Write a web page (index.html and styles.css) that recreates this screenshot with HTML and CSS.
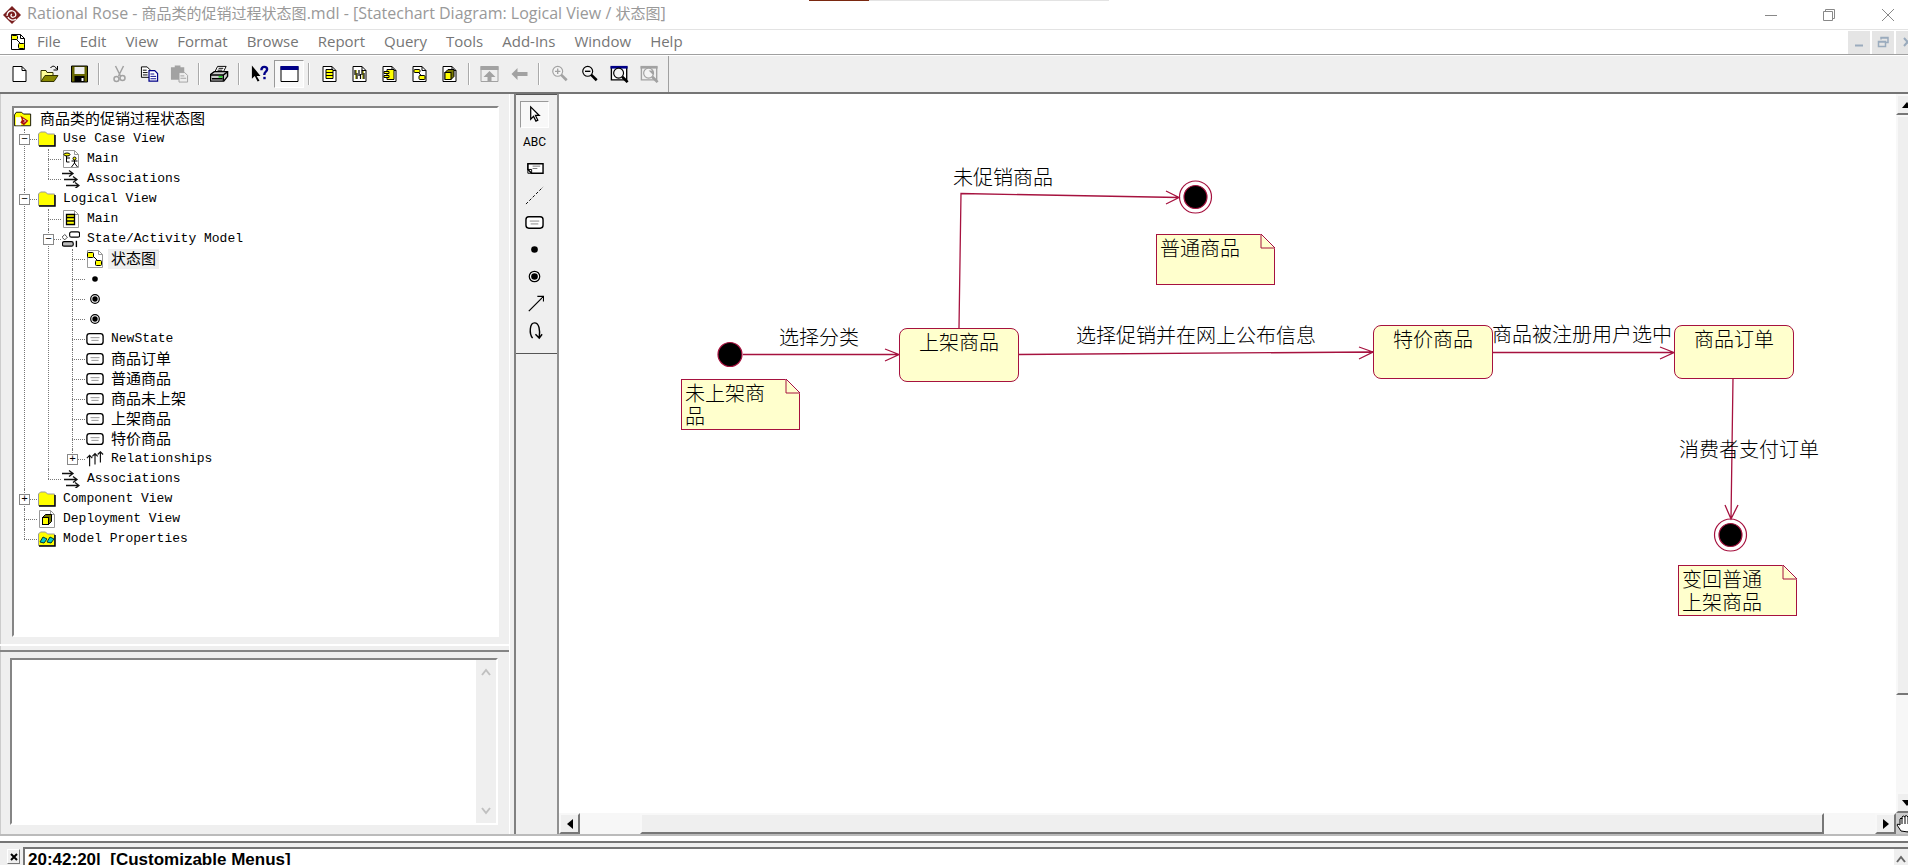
FILE: index.html
```html
<!DOCTYPE html>
<html lang="zh-CN">
<head>
<meta charset="utf-8">
<title>Rational Rose</title>
<link rel="stylesheet" href="styles.css">
</head>
<body>
<svg class="defs" aria-hidden="true">
  <symbol id="page" viewBox="0 0 18 18"><path d="M2.5 1.5h9l4 4v11h-13z" fill="#fff" stroke="#000"/><path d="M11.5 1.5v4h4" fill="none" stroke="#000"/></symbol>
  <symbol id="gpage" viewBox="0 0 18 18"><path d="M1.5 .5h11l4 4v13h-15z" fill="#fff" stroke="#999"/><path d="M12.500 .5v4h4" fill="none" stroke="#999"/></symbol>
  <symbol id="folder" viewBox="0 0 18 16"><path d="M.5 14.500V3l2-2h5l2 2h7v11.500z" fill="#ff0" stroke="#999"/><path d="M1 15h16V4" fill="none" stroke="#000" stroke-width="1.500"/></symbol>
  <symbol id="state" viewBox="0 0 20 14"><rect x="1" y="1" width="18" height="12" rx="3" fill="#fff" stroke="#000" stroke-width="1.500"/><path d="M5 5.500h10M6 8.500h8" stroke="#888"/></symbol>
  <symbol id="assoc" viewBox="0 0 18 18"><path d="M0 3.500h11M7 .5l4 3-4 3M2 9.500h13M11 6.500l4 3-4 3M4 15.500h13M13 12.500l4 3-4 3" fill="none" stroke="#111" stroke-width="1.300"/></symbol>
  <symbol id="final" viewBox="0 0 18 18"><circle cx="9" cy="9" r="4.300" fill="#fff" stroke="#000" stroke-width="1.200"/><circle cx="9" cy="9" r="2.700"/></symbol>
  <symbol id="dot" viewBox="0 0 18 18"><circle cx="9" cy="9" r="2.800"/></symbol>
  <symbol id="lens" viewBox="0 0 20 20"><circle cx="8" cy="7" r="5.500" fill="#f4f4f4" stroke="currentColor" stroke-width="1.300"/><path d="M12 11l6 6" stroke="currentColor" stroke-width="3"/></symbol>
  <symbol id="statedoc" viewBox="0 0 18 18"><use href="#page"/><path d="M7 6l6 6" stroke="#000"/><rect x="2.500" y="2.500" width="6" height="4" rx="1" fill="#ff0" stroke="#000"/><rect x="9.500" y="10.500" width="6" height="5" rx="1" fill="#ff0" stroke="#000"/></symbol>
  <symbol id="cubedoc" viewBox="0 0 18 18"><use href="#page"/><path d="M4.500 7.500l3-3h6v7l-3 3h-6z" fill="#770" stroke="#000"/><rect x="4.500" y="7.500" width="6" height="7" fill="#ff0" stroke="#000"/></symbol>
</svg>

<header class="titlebar">
  <svg class="logo" viewBox="0 0 20 20"><path d="M10 1l9 9-9 9-9-9z" fill="#7a1f1f"/><path d="M5 11c0-4 3-6 6-5s4 5 1 6-4-2-2-3M6 12c1 3 5 4 8 2" fill="none" stroke="#fff" stroke-width="1.300"/></svg>
  <h1 class="title">Rational Rose - <span>商品类的促销过程状态图</span>.mdl - [Statechart Diagram: Logical View / <span>状态图</span>]</h1>
  <div class="window-buttons">
    <button aria-label="Minimize"><svg viewBox="0 0 14 14"><path d="M1 7.500h12"/></svg></button>
    <button aria-label="Restore"><svg viewBox="0 0 14 14"><path d="M1.500 3.500h9v9h-9zM3.500 3V1.500h9v9H11"/></svg></button>
    <button aria-label="Close"><svg viewBox="0 0 14 14"><path d="M1 1l12 12M13 1L1 13"/></svg></button>
  </div>
  <span class="accent"></span>
</header>

<nav class="menubar">
  <svg class="doc" viewBox="0 0 18 18"><use href="#statedoc"/></svg>
  <button>File</button><button>Edit</button><button>View</button><button>Format</button><button>Browse</button><button>Report</button><button>Query</button><button>Tools</button><button>Add-Ins</button><button>Window</button><button>Help</button>
  <div class="mdi">
    <button aria-label="Minimize diagram"><svg viewBox="0 0 12 12"><path d="M2 9.500h8" stroke-width="2"/></svg></button>
    <button aria-label="Restore diagram"><svg viewBox="0 0 12 12"><path d="M1.500 5.500h7v5h-7zM1 6h8M4 3.500V1.500h7v5H9M4 2h7" stroke-width="1.500"/></svg></button>
    <button aria-label="Close diagram"><svg viewBox="0 0 12 12"><path d="M3 2l7 8M10 2l-7 8" stroke-width="2"/></svg></button>
  </div>
</nav>

<div class="toolbar">
  <div class="tools">
    <button aria-label="New"><svg viewBox="0 0 18 18"><use href="#page"/></svg></button>
    <button aria-label="Open"><svg viewBox="0 0 18 18"><path d="M.5 16.500v-11h5l1 2h6v3" fill="#ff9" stroke="#330"/><path d="M.5 16.500l4-6h13l-4 6z" fill="#880" stroke="#330"/><path d="M10 3c2-3 5-2 6 1M17 1v4h-4" fill="none" stroke="#000"/></svg></button>
    <button aria-label="Save"><svg viewBox="0 0 18 18"><path d="M1 1h16v16H1z" fill="#660" stroke="#000"/><path d="M4 2h10v7H4z" fill="#eee"/><path d="M4 11h10v6H4z"/><path d="M11 13h2v3h-2z" fill="#fff"/></svg></button>
    <span class="sep"></span>
    <button aria-label="Cut" class="off"><svg viewBox="0 0 18 18"><path d="M5 1l5 10M13 1L8 11" fill="none" stroke="currentColor" stroke-width="1.500"/><circle cx="6" cy="14" r="2.500" fill="none" stroke="currentColor" stroke-width="1.500"/><circle cx="12" cy="13" r="2.500" fill="none" stroke="currentColor" stroke-width="1.500"/></svg></button>
    <button aria-label="Copy"><svg viewBox="0 0 20 18"><path d="M1.500 1.500h6l3 3v8h-9z" fill="#fff" stroke="#000"/><path d="M3 5h4M3 7.500h5M3 10h5" stroke="#000"/><path d="M9.500 5.500h6l3 3v8h-9z" fill="#fff" stroke="#008" stroke-width="1.300"/><path d="M11 9h4M11 11.500h6M11 14h6" stroke="#008"/></svg></button>
    <button aria-label="Paste" class="off"><svg viewBox="0 0 20 18"><path d="M1 2h4V0h6v2h4v13H1z" fill="currentColor"/><path d="M9.500 7.500h6l3 3v7h-9z" fill="#eee" stroke="currentColor"/><path d="M11 11h4M11 13.500h6" stroke="currentColor"/></svg></button>
    <span class="sep"></span>
    <button aria-label="Print"><svg viewBox="0 0 20 18"><path d="M5 7l3-6h9l-3 6z" fill="#fff" stroke="#000"/><path d="M9 3h5M8 5h5" stroke="#000"/><path d="M.5 9.500l4-3h14v5l-4 5h-14z" fill="#ccc" stroke="#000" stroke-width="1.500"/><path d="M1 10h13l4-3M14 10v6M2 14h11" fill="none" stroke="#000" stroke-width="1.500"/><path d="M9 12h4" stroke="#0c0" stroke-width="1.500"/></svg></button>
    <span class="sep"></span>
    <button aria-label="Context help"><svg viewBox="0 0 20 18"><path d="M2 0v14l3-3 3 6 2-1-3-5h4z"/><path d="M12 5c0-5 6-4 6-1 0 3-3 2-3 6" fill="none" stroke="#008" stroke-width="2.500"/><path d="M14 12h2.500v2.500H14z" fill="#008"/></svg></button>
    <button aria-label="View documentation" class="pressed"><svg viewBox="0 0 18 18"><path d="M.5 1.500h17v15H.5z" fill="#fff" stroke="#000"/><path d="M0 1h18v4H0z" fill="#008"/></svg></button>
    <span class="sep"></span>
    <button aria-label="Class diagram"><svg viewBox="0 0 18 18"><use href="#page"/><path d="M5.500 4.500h7v9h-7zM5.500 7.500h7M5.500 10.500h7" fill="#ff0" stroke="#000"/></svg></button>
    <button aria-label="Interaction diagram"><svg viewBox="0 0 18 18"><use href="#page"/><path d="M5.500 5v9M12.500 6v8" stroke="#aa0" stroke-width="1.500"/><path d="M4.500 5v5M6.500 8v6M8.500 5v6M10 9v5M11.500 5v5M13.500 8v6" stroke="#000" stroke-width="1.200"/></svg></button>
    <button aria-label="Component diagram"><svg viewBox="0 0 18 18"><use href="#page"/><path d="M6.500 4.500h7v10h-7z" fill="#ff0" stroke="#000"/><path d="M3.500 6.500h5v2h-5zM3.500 10.500h5v2h-5z" fill="#ff0" stroke="#000"/></svg></button>
    <button aria-label="State diagram"><svg viewBox="0 0 18 18"><use href="#page"/><path d="M7 6l4 5" stroke="#000"/><rect x="3.500" y="4.500" width="6" height="3" rx="1" fill="#ff0" stroke="#000"/><rect x="8.500" y="10.500" width="6" height="4" rx="1" fill="#ff0" stroke="#000"/></svg></button>
    <button aria-label="Deployment diagram"><svg viewBox="0 0 18 18"><use href="#cubedoc"/></svg></button>
    <span class="sep"></span>
    <button aria-label="Browse parent" class="off"><svg viewBox="0 0 18 18"><path d="M.5 1.500h17v15H.5z" fill="none" stroke="currentColor"/><path d="M0 1h18v4H0z" fill="currentColor"/><path d="M9 6l6 6h-4v5H7v-5H3z" fill="currentColor"/></svg></button>
    <button aria-label="Browse previous" class="off"><svg viewBox="0 0 18 18"><path d="M1 9l6-6v4h10v4H7v4z" fill="currentColor"/></svg></button>
    <span class="sep"></span>
    <button aria-label="Zoom in" class="off"><svg viewBox="0 0 20 20"><use href="#lens"/><path d="M5 7h6M8 4v6" stroke="currentColor" stroke-width="1.500"/></svg></button>
    <button aria-label="Zoom out"><svg viewBox="0 0 20 20"><use href="#lens"/><path d="M5 7h6" stroke="#000" stroke-width="1.500"/></svg></button>
    <button aria-label="Fit in window"><svg viewBox="0 0 20 20"><path d="M1 2.500h17v14H1z" fill="#fff" stroke="#000" stroke-width="1.500"/><path d="M0 1h19v3H0z" fill="#008"/><g transform="translate(1 2)"><use href="#lens" width="20" height="20"/></g></svg></button>
    <button aria-label="Undo fit" class="off"><svg viewBox="0 0 20 20"><path d="M1 2.500h17v14H1z" fill="none" stroke="currentColor" stroke-width="1.500"/><path d="M0 1h19v3H0z" fill="currentColor"/><g transform="translate(1 2)"><use href="#lens" width="20" height="20"/></g><path d="M9 6h5v5z" fill="currentColor"/></svg></button>
  </div>
</div>

<main class="workspace">
  <aside class="browser">
    <div class="tree-pane">
      <div class="row root"><svg class="ico" viewBox="0 0 20 18"><path d="M.5 16.500v-12l2-3h6l2 2h8v13z" fill="#ff0" stroke="#000"/><path d="M2 7h6v9H2z" fill="#fff"/><path d="M7 5l9 6-5 5-4-3 2-3z" fill="#a11"/><path d="M10 9l3 2-2 2" fill="none" stroke="#fff"/></svg><span class="zh">商品类的促销过程状态图</span></div>
      <ul class="tree">
        <li><div class="row"><button class="exp" aria-label="Collapse">−</button><svg class="ico" viewBox="0 0 18 16"><use href="#folder"/></svg><span>Use Case View</span></div>
          <ul>
            <li><div class="row"><svg class="ico" viewBox="0 0 18 18"><use href="#gpage"/><ellipse cx="5" cy="4.500" rx="3" ry="1.500" fill="#ff0" stroke="#000"/><path d="M4.500 6v6h3M5 8h3M12.500 9v4M9.500 11h6M12.500 13l-3 4M12.500 13l3 4" fill="none" stroke="#000"/><circle cx="12.500" cy="8.500" r="1.500" fill="#ff0" stroke="#000"/></svg><span>Main</span></div></li>
            <li><div class="row"><svg class="ico" viewBox="0 0 18 18"><use href="#assoc"/></svg><span>Associations</span></div></li>
          </ul>
        </li>
        <li><div class="row"><button class="exp" aria-label="Collapse">−</button><svg class="ico" viewBox="0 0 18 16"><use href="#folder"/></svg><span>Logical View</span></div>
          <ul>
            <li><div class="row"><svg class="ico" viewBox="0 0 18 18"><use href="#gpage"/><path d="M4.500 4.500h8v10h-8zM4.500 7.500h8M4.500 11h8" fill="#ff0" stroke="#000" stroke-width="1.300"/></svg><span>Main</span></div></li>
            <li><div class="row"><button class="exp" aria-label="Collapse">−</button><svg class="ico" viewBox="0 0 20 18"><path d="M3 4l3 3-3 3-3-3z" fill="#fff" stroke="#333"/><rect x="8.500" y="1" width="11" height="6" rx="2" fill="#fff" stroke="#000" stroke-width="1.300"/><rect x=".5" y="12" width="12" height="5" rx="2" fill="#bbb" stroke="#000" stroke-width="1.300"/><path d="M16 11v7" stroke="#000" stroke-width="1.500"/></svg><span>State/Activity Model</span></div>
              <ul>
                <li><div class="row"><svg class="ico" viewBox="0 0 18 18"><use href="#gpage"/><path d="M7 6l6 6" stroke="#000"/><rect x="1.500" y="2.500" width="6" height="5" rx="1" fill="#ff0" stroke="#000"/><rect x="9.500" y="10.500" width="6" height="5" rx="1" fill="#ff0" stroke="#000"/></svg><span class="zh selected">状态图</span></div></li>
                <li><div class="row"><svg class="ico" viewBox="0 0 18 18"><use href="#dot"/></svg></div></li>
                <li><div class="row"><svg class="ico" viewBox="0 0 18 18"><use href="#final"/></svg></div></li>
                <li><div class="row"><svg class="ico" viewBox="0 0 18 18"><use href="#final"/></svg></div></li>
                <li><div class="row"><svg class="ico" viewBox="0 0 20 14"><use href="#state"/></svg><span>NewState</span></div></li>
                <li><div class="row"><svg class="ico" viewBox="0 0 20 14"><use href="#state"/></svg><span class="zh">商品订单</span></div></li>
                <li><div class="row"><svg class="ico" viewBox="0 0 20 14"><use href="#state"/></svg><span class="zh">普通商品</span></div></li>
                <li><div class="row"><svg class="ico" viewBox="0 0 20 14"><use href="#state"/></svg><span class="zh">商品未上架</span></div></li>
                <li><div class="row"><svg class="ico" viewBox="0 0 20 14"><use href="#state"/></svg><span class="zh">上架商品</span></div></li>
                <li><div class="row"><svg class="ico" viewBox="0 0 20 14"><use href="#state"/></svg><span class="zh">特价商品</span></div></li>
                <li><div class="row"><button class="exp" aria-label="Expand">+</button><svg class="ico" viewBox="0 0 20 18"><path d="M4 17V5M1 8l3-3 3 3M10 15V3M7 6l3-3 3 3M16 13V1M13 4l3-3 3 3" fill="none" stroke="#111" stroke-width="1.300"/></svg><span>Relationships</span></div></li>
              </ul>
            </li>
            <li><div class="row"><svg class="ico" viewBox="0 0 18 18"><use href="#assoc"/></svg><span>Associations</span></div></li>
          </ul>
        </li>
        <li><div class="row"><button class="exp" aria-label="Expand">+</button><svg class="ico" viewBox="0 0 18 16"><use href="#folder"/></svg><span>Component View</span></div></li>
        <li><div class="row"><svg class="ico" viewBox="0 0 18 18"><use href="#gpage"/><path d="M4.500 7.500l3-3h6v7l-3 3h-6z" fill="#770" stroke="#000"/><rect x="4.500" y="7.500" width="6" height="7" fill="#ff0" stroke="#000"/></svg><span>Deployment View</span></div></li>
        <li><div class="row"><svg class="ico" viewBox="0 0 18 16"><use href="#folder"/><path d="M2 11l3-5 4 2-3 4zM9 11l3-5 4 2-3 4z" fill="#0cc" stroke="#033"/></svg><span>Model Properties</span></div></li>
      </ul>
    </div>
    <div class="doc-pane">
      <textarea aria-label="Documentation"></textarea>
      <div class="thin-scroll"><svg viewBox="0 0 10 8"><path d="M1 7l4-5 4 5"/></svg><svg viewBox="0 0 10 8"><path d="M1 1l4 5 4-5"/></svg></div>
    </div>
  </aside>

  <div class="toolbox-column">
    <div class="toolbox">
      <button class="pressed" aria-label="Select"><svg viewBox="0 0 20 20"><path d="M6 2v13l3-3 2.500 5 2-1-2.500-5h4z" fill="#fff" stroke="#000" stroke-width="1.300"/></svg></button>
      <button class="abc">ABC</button>
      <button aria-label="Note"><svg viewBox="0 0 20 20"><path d="M3 5h16v10H7l-4-4z" fill="#fff" stroke="#000" stroke-width="1.500"/><path d="M3 5v10h4v-4H3" fill="none" stroke="#000"/><path d="M8 7.500h8M8 10h5" fill="none" stroke="#777"/></svg></button>
      <button aria-label="Anchor"><svg viewBox="0 0 20 20"><path d="M1 19L19 1" stroke="#000" stroke-dasharray="3 2"/></svg></button>
      <button aria-label="State"><svg viewBox="0 0 20 14"><use href="#state"/></svg></button>
      <button aria-label="Start state"><svg viewBox="0 0 20 20"><circle cx="10" cy="10" r="3.500"/></svg></button>
      <button aria-label="End state"><svg viewBox="0 0 20 20"><circle cx="10" cy="10" r="5.500" fill="#fff" stroke="#000" stroke-width="1.300"/><circle cx="10" cy="10" r="3.500"/></svg></button>
      <button aria-label="Transition"><svg viewBox="0 0 20 20"><path d="M4 18L19 3M13 2.500h6.500V8" fill="none" stroke="#000" stroke-width="1.300"/></svg></button>
      <button aria-label="Transition to self"><svg viewBox="0 0 20 20"><path d="M8 18c-4-5-3-16 2-16s6 8 5 15M11 14l4 4 3-4" fill="none" stroke="#000" stroke-width="1.500"/></svg></button>
    </div>
  </div>

  <section class="diagram">
    <div class="canvas">
      <svg class="wires" width="1337" height="719">
        <g fill="none" stroke="#a6123f" stroke-width="1.300">
          <path d="M184 260.500H340M326 255l14 5.500-14 6.500"/>
          <path d="M400 234L402 99.500L620 103.500M607 97l13 6.500-13 6.500"/>
          <path d="M459 260.500L814 258M800 253l14 5-14 7"/>
          <path d="M933 258.500H1115M1101 253l14 5.500-14 6.500"/>
          <path d="M1174 284L1172 425M1166 411l6 14 7-14"/>
        </g>
        <g stroke="#a6123f" stroke-width="1.200">
          <circle cx="171" cy="260.500" r="12"/>
          <circle cx="636.500" cy="103" r="16" fill="none"/><circle cx="636.500" cy="103" r="11.500"/>
          <circle cx="1171.500" cy="441" r="16" fill="none"/><circle cx="1171.500" cy="441" r="11.500"/>
        </g>
      </svg>
      <div class="state s1">上架商品</div>
      <div class="state s2">特价商品</div>
      <div class="state s3">商品订单</div>
      <div class="note n1">未上架商<br>品<svg viewBox="0 0 16 16"><path d="M0 0h16v16z" fill="#fff"/><path d="M1 0v14h14M1 0l14 14" fill="none" stroke="#a6123f"/></svg></div>
      <div class="note n2">普通商品<svg viewBox="0 0 16 16"><path d="M0 0h16v16z" fill="#fff"/><path d="M1 0v14h14M1 0l14 14" fill="none" stroke="#a6123f"/></svg></div>
      <div class="note n3">变回普通<br>上架商品<svg viewBox="0 0 16 16"><path d="M0 0h16v16z" fill="#fff"/><path d="M1 0v14h14M1 0l14 14" fill="none" stroke="#a6123f"/></svg></div>
      <span class="label l1">选择分类</span>
      <span class="label l2">未促销商品</span>
      <span class="label l3">选择促销并在网上公布信息</span>
      <span class="label l4">商品被注册用户选中</span>
      <span class="label l5">消费者支付订单</span>
    </div>
    <div class="vscroll">
      <button aria-label="Scroll up"><svg viewBox="0 0 10 6"><path d="M0 6l5-6 5 6z"/></svg></button>
      <span class="thumb"></span><span class="track"></span>
      <button aria-label="Scroll down"><svg viewBox="0 0 10 6"><path d="M0 0l5 6 5-6z"/></svg></button>
    </div>
    <div class="hscroll">
      <button aria-label="Scroll left"><svg viewBox="0 0 6 10"><path d="M6 0L0 5l6 5z"/></svg></button>
      <span class="track lead"></span><span class="thumb"></span><span class="track tail"></span>
      <button aria-label="Scroll right"><svg viewBox="0 0 6 10"><path d="M0 0l6 5-6 5z"/></svg></button>
    </div>
    <button class="pan" aria-label="Pan"><svg viewBox="0 0 18 18"><path d="M5 16L1 10q0-2 3 0V4q1-2 2 0V2q1-2 3 0v-1q2-1 3 1v1q2-1 2 1v8l-2 5z" fill="#fff" stroke="#000"/><path d="M6 3v6M9 2v7M12 3v6" stroke="#000"/></svg></button>
  </section>
</main>

<footer class="log">
  <button class="close" aria-label="Close log"><svg viewBox="0 0 8 8"><path d="M1 1l6 6M7 1L1 7" stroke="#000" stroke-width="2"/></svg></button>
  <div class="log-box"><pre>20:42:20|  [Customizable Menus]</pre><div class="thin-scroll dark"><svg viewBox="0 0 10 8"><path d="M1 7l4-5 4 5"/></svg></div></div>
</footer>
</body>
</html>
```
FILE: styles.css
```css
* { box-sizing: border-box; }

body {
  margin: 0;
  height: 100vh;
  display: flex;
  flex-direction: column;
  overflow: hidden;
  background: #efefef;
  color: #000;
  font-family: "Open Sans", "Noto Sans CJK SC", sans-serif;
  font-size: 15px;
}

button {
  margin: 0;
  padding: 0;
  border: 0;
  background: none;
  font: inherit;
  color: inherit;
  display: flex;
  align-items: center;
  justify-content: center;
}

.defs { display: none; }

/* Title bar */
.titlebar {
  position: relative;
  flex: none;
  height: 30px;
  display: flex;
  align-items: center;
  padding-left: 2px;
  background: #fff;
  border-bottom: 1px solid #e3e3e3;
}
.logo { width: 20px; height: 20px; }
.title {
  margin: 0 0 0 5px;
  padding-bottom: 2px;
  font-size: 16px;
  font-weight: 400;
  line-height: 27px;
  color: #999;
  white-space: nowrap;
}
.title span { font-size: 15px; }
.window-buttons { margin-left: auto; display: flex; }
.window-buttons button { width: 58px; height: 28px; }
.window-buttons button:last-child { width: 40px; margin-left: 10px; }
.window-buttons svg { width: 14px; height: 14px; fill: none; stroke: #888; }
.accent {
  position: absolute;
  top: 0;
  left: 809px;
  width: 300px;
  height: 1px;
  background: linear-gradient(90deg, #7a2810 60px, #e3e3e3 60px);
}

/* Menu bar */
.menubar {
  flex: none;
  height: 25px;
  display: flex;
  align-items: center;
  gap: 19px;
  padding-left: 9px;
  background: #fff;
  border-bottom: 1px solid #a0a0a0;
  color: #767676;
}
.menubar > button { height: 24px; padding-bottom: 2px; line-height: 22px; }
.doc { width: 18px; height: 18px; margin-right: -9px; }
.mdi { margin-left: auto; display: flex; gap: 2px; width: 60px; overflow: hidden; }
.mdi button { flex: none; width: 22px; height: 23px; background: #e5e5e5; }
.mdi svg { width: 12px; height: 12px; fill: none; stroke: #9aabbd; }

/* Tool bar */
.toolbar {
  flex: none;
  height: 39px;
  display: flex;
  border-top: 1px solid #fff;
  border-bottom: 2px solid #757575;
}
.tools {
  display: flex;
  align-items: center;
  padding: 0 4px;
  border-right: 1px solid #a0a0a0;
}
.tools button { width: 30px; height: 28px; }
.tools svg { width: 19px; height: 18px; }
.tools .off { color: #a2a2a2; }
.sep { width: 10px; height: 22px; display: flex; justify-content: center; }
.sep::before { content: ""; width: 1px; background: #aaa; border-right: 1px solid #fff; }
.pressed {
  background: #f8f8f8;
  border: 1px solid #fff;
  border-top-color: #999;
  border-left-color: #999;
}

/* Workspace */
.workspace { flex: 1; min-height: 0; display: flex; border-bottom: 2px solid #bbb; }

.browser {
  flex: none;
  width: 510px;
  display: grid;
  grid-template-rows: 557px 1fr;
  border-left: 1px solid #ccc;
  border-right: 1px solid #fff;
}
.tree-pane {
  margin: 12px 10px 14px 11px;
  padding-top: 1px;
  background: #fff;
  border: 2px solid #fff;
  border-top-color: #858585;
  border-left-color: #858585;
  font: 13px/20px "Liberation Mono", "Noto Sans CJK SC", monospace;
}
.zh { padding-bottom: 3px; font-size: 15px; font-family: "Noto Sans CJK SC", sans-serif; }
.tree, .tree ul { list-style: none; margin: 0; padding: 0; }
.tree { margin-left: 1px; }
.tree ul { margin-left: 24px; }
.tree li { position: relative; }
.tree li::before {
  content: "";
  position: absolute;
  left: 9px;
  top: 0;
  bottom: 0;
  border-left: 1px dotted #777;
}
.tree li:last-child::before { bottom: auto; height: 10px; }
.row {
  position: relative;
  height: 20px;
  display: flex;
  align-items: center;
  gap: 7px;
  padding-left: 23px;
  white-space: nowrap;
}
.tree .row::before {
  content: "";
  position: absolute;
  left: 9px;
  width: 13px;
  top: 10px;
  border-top: 1px dotted #777;
}
.row.root { padding-left: 0; gap: 8px; }
.ico { flex: none; width: 18px; height: 18px; }
.exp {
  position: absolute;
  left: 4px;
  top: 5px;
  width: 11px;
  height: 11px;
  background: #fff;
  border: 1px solid #888;
  font: 11px/9px "Liberation Mono", monospace;
}
.selected { background: #efefef; padding: 0 3px 3px; margin: 0 -3px; line-height: 17px; }

.doc-pane {
  margin: 7px 11px 9px 9px;
  display: flex;
  background: #fff;
  border: 2px solid #fff;
  border-top-color: #858585;
  border-left-color: #858585;
  position: relative;
}
.doc-pane::before {
  content: "";
  position: absolute;
  left: -12px;
  right: -13px;
  top: -16px;
  height: 4px;
  border-top: 2px solid #fff;
  border-bottom: 2px solid #858585;
}
.doc-pane textarea { flex: 1; border: 0; resize: none; background: #fff; outline: 0; }
.thin-scroll {
  width: 20px;
  background: #efefef;
  display: flex;
  flex-direction: column;
  justify-content: space-between;
  align-items: center;
  padding: 8px 0;
}
.thin-scroll svg { width: 10px; height: 8px; fill: none; stroke: #c0c0c0; stroke-width: 2; }
.thin-scroll.dark { width: 14px; padding: 6px 0; }
.thin-scroll.dark svg { flex: none; stroke: #666; }

.toolbox-column {
  flex: none;
  width: 45px;
  margin-left: 4px;
  border-left: 2px solid #808080;
  border-right: 2px solid #909090;
}
.toolbox {
  display: grid;
  grid-template-rows: repeat(9, 27px);
  padding: 6px 0 9px 4px;
  border-top: 1px solid #555;
  border-bottom: 1px solid #555;
}
.toolbox button { width: 29px; height: 27px; }
.toolbox svg { width: 19px; height: 19px; }
.toolbox .abc { font: 12px "Roboto", sans-serif; }

/* Diagram */
.diagram {
  flex: 1;
  min-width: 0;
  display: grid;
  grid-template: 1fr 21px / 1fr 12px;
  background: #fff;
}
.canvas { position: relative; overflow: hidden; font: 20px/23px "Noto Sans CJK SC", sans-serif; font-weight: 300; }
.wires { position: absolute; left: 0; top: 0; }
.label { position: absolute; white-space: nowrap; }
.state {
  position: absolute;
  width: 120px;
  height: 54px;
  padding-top: 1px;
  text-align: center;
  background: #ffffcd;
  border: 1px solid #a6123f;
  border-radius: 8px;
}
.note {
  position: absolute;
  width: 119px;
  height: 51px;
  padding: 1px 3px;
  background: #ffffcd;
  border: 1px solid #a6123f;
}
.note svg { position: absolute; top: -1px; right: -2px; width: 16px; height: 16px; }
.s1 { left: 340px; top: 234px; }
.s2 { left: 814px; top: 231px; }
.s3 { left: 1115px; top: 231px; }
.n1 { left: 122px; top: 285px; }
.n2 { left: 597px; top: 140px; }
.n3 { left: 1119px; top: 471px; }
.l1 { left: 220px; top: 231px; }
.l2 { left: 394px; top: 71px; }
.l3 { left: 517px; top: 229px; }
.l4 { left: 933px; top: 228px; }
.l5 { left: 1120px; top: 343px; }

.vscroll, .hscroll { display: flex; overflow: hidden; }
.vscroll { flex-direction: column; }
.vscroll > *, .hscroll > * { flex: none; }
.vscroll button, .hscroll button, .thumb {
  background: #efefef;
  border: 2px solid #777;
  border-top-color: #f8f8f8;
  border-left-color: #f8f8f8;
}
.vscroll button, .hscroll button { width: 21px; height: 21px; }
.vscroll svg { width: 10px; height: 6px; }
.hscroll svg { width: 6px; height: 10px; }
.track { background: #f7f7f7; }
.vscroll .thumb { width: 21px; flex: 579; }
.vscroll .track { flex: 98; }
.hscroll .lead { flex: 60; }
.hscroll .thumb { flex: 1184; }
.hscroll .tail { flex: 51; }
.pan { overflow: hidden; justify-content: flex-start; background: #ccc; }
.pan svg { flex: none; width: 18px; height: 18px; }

/* Log */
.log {
  flex: none;
  height: 29px;
  display: flex;
  align-items: flex-start;
  border-top: 5px solid #fff;
  position: relative;
}
.log::before {
  content: "";
  position: absolute;
  left: 0;
  right: 0;
  top: 0;
  border-top: 2px solid #757575;
}
.close {
  width: 13px;
  height: 15px;
  margin: 8px 3px 0 7px;
  border: 1px solid #777;
  border-top-color: #fff;
  border-left-color: #fff;
}
.close svg { width: 8px; height: 8px; }
.log-box {
  flex: 1;
  height: 18px;
  margin-top: 6px;
  display: flex;
  justify-content: space-between;
  overflow: hidden;
  background: #fff;
  border-top: 2px solid #757575;
  border-left: 2px solid #757575;
}
.log pre { margin: 0 0 0 3px; font: bold 17px/22px "Liberation Sans", Arial, sans-serif; }
```
